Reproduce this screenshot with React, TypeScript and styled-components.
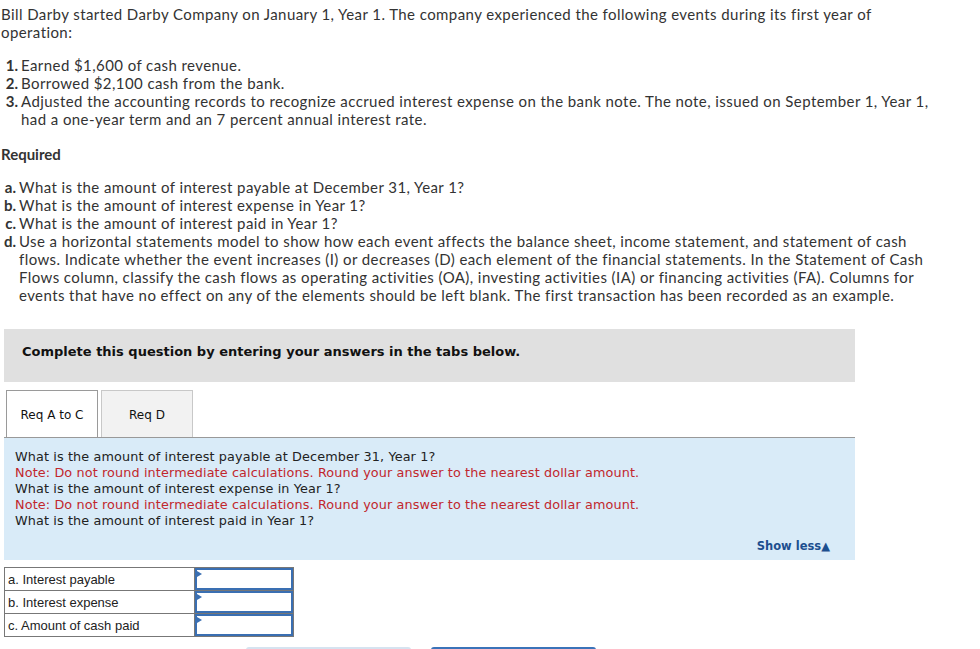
import { FC } from 'react';
import styled, { createGlobalStyle } from 'styled-components';

const GlobalStyle = createGlobalStyle`
  body {
    margin: 0;
    background: #ffffff;
    color: #333333;
  }
`;

const Page = styled.div`
  padding: 5px 0 0 0;
  font-family: Lato, 'Open Sans', sans-serif;
  font-size: 15px;
  line-height: 18px;
  letter-spacing: 0.42px;
  color: #333333;
`;

const Intro = styled.p`
  margin: 0 0 15px 1px;
  white-space: nowrap;
`;

const EventList = styled.ol`
  list-style: none;
  margin: 0;
  padding: 0;
`;

const Item = styled.li<{ $numWidth: number }>`
  display: grid;
  grid-template-columns: ${({ $numWidth }) => $numWidth}px auto;
  column-gap: 3px;
  white-space: nowrap;
`;

const Num = styled.span`
  font-weight: 700;
  text-align: right;
  letter-spacing: 0;
`;

const Required = styled.h4`
  margin: 17px 0 15px 1px;
  font-size: 15px;
  font-weight: 700;
  letter-spacing: 0;
`;

const Banner = styled.div`
  margin: 25px 0 0 4px;
  width: 851px;
  height: 53px;
  box-sizing: border-box;
  padding: 14px 0 0 18px;
  background: #e0e0e0;
  font-family: 'DejaVu Sans', Verdana, sans-serif;
  font-size: 13px;
  font-weight: 700;
  letter-spacing: 0;
  color: #111;
`;

const Tabs = styled.div`
  display: flex;
  gap: 3px;
  margin: 8px 0 0 4px;
  width: 851px;
  padding-left: 2px;
  box-sizing: border-box;
  border-bottom: 1px solid #999;
`;

const Tab = styled.div<{ $active?: boolean }>`
  width: 92px;
  height: 47px;
  box-sizing: border-box;
  display: flex;
  align-items: center;
  justify-content: center;
  padding-top: 2px;
  border: 1px solid ${({ $active }) => ($active ? '#9a9a9a' : '#c8c8c8')};
  border-bottom: none;
  background: ${({ $active }) => ($active ? '#ffffff' : '#f2f2f2')};
  font-family: 'DejaVu Sans', Tahoma, sans-serif;
  font-size: 12px;
  letter-spacing: 0;
  color: #111;
`;

const Panel = styled.div`
  margin-left: 4px;
  width: 851px;
  height: 122px;
  box-sizing: border-box;
  padding: 11px 0 0 11px;
  background: #d9ebf8;
  font-family: 'DejaVu Sans', Verdana, sans-serif;
  font-size: 12.8px;
  line-height: 16px;
  letter-spacing: 0.12px;
  color: #222;
  display: flex;
  flex-direction: column;
`;

const Line = styled.div<{ $note?: boolean }>`
  color: ${({ $note }) => ($note ? '#c1272d' : '#222')};
  white-space: nowrap;
`;

const ShowLess = styled.div`
  margin-top: auto;
  margin-bottom: 6px;
  align-self: flex-end;
  margin-right: 25px;
  font-size: 11.5px;
  font-weight: 700;
  letter-spacing: 0;
  color: #1d4f8f;
`;

const AnswerTable = styled.table`
  margin: 7px 0 0 4px;
  border-collapse: collapse;
  font-family: 'Liberation Sans', Arial, sans-serif;
  font-size: 13px;
  letter-spacing: 0;
  color: #222;
`;

const LabelCell = styled.td`
  width: 190px;
  height: 22px;
  padding: 1px 0 0 3px;
  box-sizing: border-box;
  border: 1px solid #777;
`;

const InputCell = styled.td`
  width: 98px;
  padding: 0;
  border: 1px solid #777;
  position: relative;
`;

const Field = styled.input`
  display: block;
  width: 98px;
  height: 22px;
  box-sizing: border-box;
  border: 2px solid #3a6fb2;
  margin: 0;
  padding: 0;
  background: #fff;
`;

const Marker = styled.span`
  position: absolute;
  top: 3px;
  left: 2px;
  width: 0;
  height: 0;
  border-top: 3px solid transparent;
  border-bottom: 3px solid transparent;
  border-left: 5px solid #3a6fb2;
`;

const Buttons = styled.div`
  display: flex;
  gap: 20px;
  margin: 10px 0 0 246px;
`;

const NavButton = styled.div<{ $primary?: boolean }>`
  width: 165px;
  height: 30px;
  border-radius: 3px;
  background: ${({ $primary }) => ($primary ? '#3b73b9' : '#d6e3f0')};
`;

const events = [
  ['1.', 'Earned $1,600 of cash revenue.'],
  ['2.', 'Borrowed $2,100 cash from the bank.'],
];

const rows = ['a. Interest payable', 'b. Interest expense', 'c. Amount of cash paid'];

const App: FC = () => {
  return (
    <Page>
      <GlobalStyle />
      <Intro>
        Bill Darby started Darby Company on January 1, Year 1. The company experienced the following events during its first year of
        <br />
        operation:
      </Intro>
      <EventList>
        {events.map(([n, t]) => (
          <Item key={n} $numWidth={18}>
            <Num>{n}</Num>
            <span>{t}</span>
          </Item>
        ))}
        <Item $numWidth={18}>
          <Num>3.</Num>
          <span>
            Adjusted the accounting records to recognize accrued interest expense on the bank note. The note, issued on September 1, Year 1,
            <br />
            had a one-year term and an 7 percent annual interest rate.
          </span>
        </Item>
      </EventList>
      <Required>Required</Required>
      <EventList>
        <Item $numWidth={16}>
          <Num>a.</Num>
          <span>What is the amount of interest payable at December 31, Year 1?</span>
        </Item>
        <Item $numWidth={16}>
          <Num>b.</Num>
          <span>What is the amount of interest expense in Year 1?</span>
        </Item>
        <Item $numWidth={16}>
          <Num>c.</Num>
          <span>What is the amount of interest paid in Year 1?</span>
        </Item>
        <Item $numWidth={16}>
          <Num>d.</Num>
          <span>
            Use a horizontal statements model to show how each event affects the balance sheet, income statement, and statement of cash
            <br />
            flows. Indicate whether the event increases (I) or decreases (D) each element of the financial statements. In the Statement of Cash
            <br />
            Flows column, classify the cash flows as operating activities (OA), investing activities (IA) or financing activities (FA). Columns for
            <br />
            events that have no effect on any of the elements should be left blank. The first transaction has been recorded as an example.
          </span>
        </Item>
      </EventList>

      <Banner>Complete this question by entering your answers in the tabs below.</Banner>

      <Tabs>
        <Tab $active>Req A to C</Tab>
        <Tab>Req D</Tab>
      </Tabs>

      <Panel>
        <Line>What is the amount of interest payable at December 31, Year 1?</Line>
        <Line $note>Note: Do not round intermediate calculations. Round your answer to the nearest dollar amount.</Line>
        <Line>What is the amount of interest expense in Year 1?</Line>
        <Line $note>Note: Do not round intermediate calculations. Round your answer to the nearest dollar amount.</Line>
        <Line>What is the amount of interest paid in Year 1?</Line>
        <ShowLess>Show less▲</ShowLess>
      </Panel>

      <AnswerTable>
        <tbody>
          {rows.map((r) => (
            <tr key={r}>
              <LabelCell>{r}</LabelCell>
              <InputCell>
                <Field type="text" />
                <Marker />
              </InputCell>
            </tr>
          ))}
        </tbody>
      </AnswerTable>

      <Buttons>
        <NavButton />
        <NavButton $primary />
      </Buttons>
    </Page>
  );
};

export default App;
